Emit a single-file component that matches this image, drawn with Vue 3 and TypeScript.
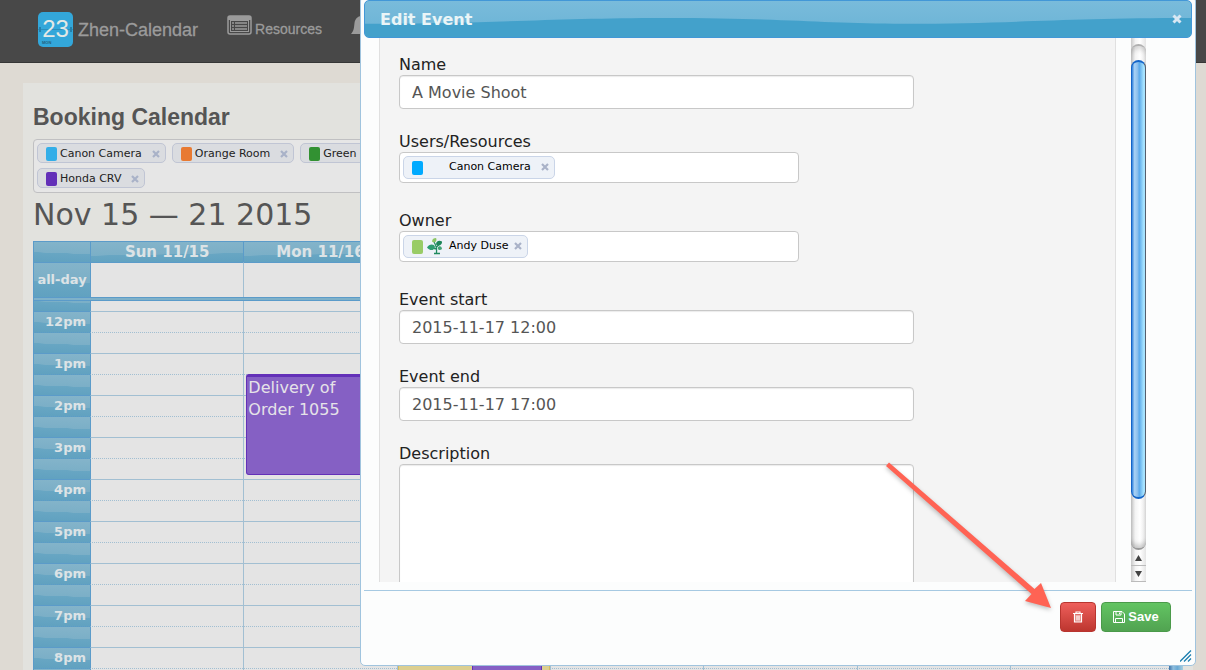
<script setup lang="ts">
import { ref } from 'vue'

interface Token {
  name: string
  color: string
}

const filters = ref<Token[]>([
  { name: 'Canon Camera', color: '#33aee8' },
  { name: 'Orange Room', color: '#e87a32' },
  { name: 'Green Room', color: '#329132' },
  { name: 'Honda CRV', color: '#6330b8' },
])

const dayCount = 7
const dayLabels = ['Sun 11/15', 'Mon 11/16']
const hours = ['12pm', '1pm', '2pm', '3pm', '4pm', '5pm', '6pm', '7pm', '8pm']

interface Slot {
  id: string
  label: string
  half: boolean
}

const slots: Slot[] = [{ id: '11am-half', label: '', half: true }]
for (const hour of hours) {
  slots.push({ id: hour, label: hour, half: false })
  slots.push({ id: `${hour}-half`, label: '', half: true })
}

const name = ref('A Movie Shoot')
const start = ref('2015-11-17 12:00')
const end = ref('2015-11-17 17:00')
const description = ref('')
</script>

<template>
  <div class="app">
    <nav class="navbar">
      <a class="brand" href="#">
        <svg width="35" height="35" viewBox="0 0 35 35" aria-hidden="true">
          <rect width="35" height="35" rx="5" fill="#33a7da" />
          <path d="M0 17.500H35" stroke="#2b8fbd" />
          <rect x="1" y="15" width="2" height="5" fill="#2380ac" />
          <rect x="32" y="15" width="2" height="5" fill="#2380ac" />
          <text x="17.500" y="25" text-anchor="middle" class="logo-day">23</text>
          <text x="4" y="32" class="logo-week">MON</text>
        </svg>
        <span>Zhen-Calendar</span>
      </a>
      <a class="nav-item" href="#">
        <svg width="25" height="20" viewBox="0 0 25 20" aria-hidden="true">
          <rect x="1" y="1" width="23" height="18" rx="2" fill="none" stroke="#9b9b9b" stroke-width="1.500" />
          <path d="M1 1h23v4H1z" fill="#9b9b9b" />
          <rect x="3.500" y="5.500" width="18" height="11" fill="none" stroke="#9b9b9b" />
          <path d="M5 8h2M8 8h12M5 11h2M8 11h12M5 14h2M8 14h12" stroke="#9b9b9b" stroke-width="1.500" />
        </svg>
        <span>Resources</span>
      </a>
      <a class="nav-item bell" href="#" aria-label="Notifications">
        <svg width="20" height="20" viewBox="0 0 20 20" aria-hidden="true">
          <path d="M0 19C3 16 3 12 3.500 8C4 4 7 1 10 1s6 3 6.500 7c.5 4 .5 8 3.500 11z" fill="#9b9b9b" />
        </svg>
      </a>
    </nav>

    <main class="panel">
      <h1>Booking Calendar</h1>
      <div class="filters">
        <span v-for="token in filters" :key="token.name" class="chip">
          <i class="swatch" :style="{ background: token.color }"></i>
          <span>{{ token.name }}</span>
          <button type="button" class="chip-close" :aria-label="`Remove ${token.name}`">
            <svg width="8" height="8" viewBox="0 0 8 8"><path d="M1 1l6 6M7 1l-6 6" /></svg>
          </button>
        </span>
      </div>
      <h2>Nov 15 — 21 2015</h2>

      <section class="calendar">
        <table class="grid head">
          <colgroup>
            <col class="gutter-col" />
            <col v-for="day in dayCount" :key="day" class="day-col" />
          </colgroup>
          <thead>
            <tr>
              <th class="gloss"></th>
              <th v-for="day in dayCount" :key="day" class="gloss wide" scope="col">{{ dayLabels[day - 1] }}</th>
            </tr>
          </thead>
          <tbody>
            <tr class="all-day">
              <th class="gloss" scope="row">all-day</th>
              <td v-for="day in dayCount" :key="day"></td>
            </tr>
          </tbody>
        </table>
        <div class="divider"></div>
        <div class="scroller">
          <table class="grid slots">
            <colgroup>
              <col class="gutter-col" />
              <col v-for="day in dayCount" :key="day" class="day-col" />
            </colgroup>
            <tbody>
              <tr v-for="slot in slots" :key="slot.id" :class="{ half: slot.half }">
                <th class="gloss" scope="row">{{ slot.label }}</th>
                <td v-for="day in dayCount" :key="day">
                  <div v-if="slot.id === '1pm-half' && day === 2" class="event delivery">Delivery of<br />Order 1055</div>
                  <template v-if="slot.id === '8pm' && day === 3">
                    <div class="event shift"></div>
                    <div class="event booking"></div>
                  </template>
                </td>
              </tr>
            </tbody>
          </table>
          <div class="page-bar"></div>
        </div>
      </section>
    </main>

    <section class="dialog" role="dialog" aria-labelledby="dialog-title">
      <header class="titlebar">
        <svg class="wave" viewBox="0 0 828 38" preserveAspectRatio="none" aria-hidden="true">
          <path d="M0 24C130 24 190 18 300 18C420 18 460 24 540 24C650 24 700 18 828 18V38H0z" fill="#43a1cb" />
        </svg>
        <strong id="dialog-title">Edit Event</strong>
        <button type="button" class="dialog-close" aria-label="Close">
          <svg width="10" height="10" viewBox="0 0 10 10"><path d="M1.500 1.500l7 7M8.500 1.500l-7 7" /></svg>
        </button>
      </header>

      <div class="content">
        <form class="form">
          <div class="field">
            <label for="name">Name</label>
            <input id="name" v-model="name" class="text" type="text" />
          </div>
          <div class="field tokens">
            <label for="resources">Users/Resources</label>
            <div class="token-box">
              <span class="chip">
                <i class="swatch sky"></i>
                <i class="avatar"></i>
                <span>Canon Camera</span>
                <button type="button" class="chip-close" aria-label="Remove Canon Camera">
                  <svg width="8" height="8" viewBox="0 0 8 8"><path d="M1 1l6 6M7 1l-6 6" /></svg>
                </button>
              </span>
              <input id="resources" type="text" />
            </div>
          </div>
          <div class="field tokens">
            <label for="owner">Owner</label>
            <div class="token-box">
              <span class="chip owner">
                <i class="swatch lime"></i>
                <svg class="avatar" width="18" height="18" viewBox="0 0 18 18" aria-hidden="true">
                  <path d="M8 5C10 8 11 11 10.500 16M10.500 12C8 12 7 11 5 10M10.500 10l3-3M8 16.500h6" fill="none" stroke="#1f8a5f" stroke-width="1.300" />
                  <path d="M1 10.500C3 7 8 6.500 9 10C8 14.500 3 13.500 1 10.500z" fill="#2d9c70" />
                  <path d="M10 7.500C10 4 13 3 16 4.500C16.500 7.500 13 10 10 7.500z" fill="#1d8659" />
                  <path d="M6 4.500C6 2 8 1 10 1C11.500 3.500 9 7 6 4.500z" fill="#8cc665" />
                  <path d="M11.500 11C13 8 16 9 16 12C14 14 12 13 11.500 11z" fill="#43a476" />
                </svg>
                <span>Andy Duse</span>
                <button type="button" class="chip-close" aria-label="Remove Andy Duse">
                  <svg width="8" height="8" viewBox="0 0 8 8"><path d="M1 1l6 6M7 1l-6 6" /></svg>
                </button>
              </span>
              <input id="owner" type="text" />
            </div>
          </div>
          <div class="field">
            <label for="start">Event start</label>
            <input id="start" v-model="start" class="text" type="text" />
          </div>
          <div class="field">
            <label for="end">Event end</label>
            <input id="end" v-model="end" class="text" type="text" />
          </div>
          <div class="field">
            <label for="description">Description</label>
            <textarea id="description" v-model="description" class="text"></textarea>
          </div>
        </form>
        <div class="scrollbar" aria-hidden="true">
          <div class="track">
            <div class="thumb"></div>
          </div>
          <div class="step"><svg width="7" height="6" viewBox="0 0 7 6"><path d="M3.500 0L7 6H0z" /></svg></div>
          <div class="step"><svg width="7" height="6" viewBox="0 0 7 6"><path d="M0 0h7L3.500 6z" /></svg></div>
        </div>
      </div>

      <footer class="actions">
        <button type="button" class="btn danger" aria-label="Delete">
          <svg width="12" height="12" viewBox="0 0 12 12" aria-hidden="true">
            <path d="M2.500 3.500h7V11h-7z" fill="#fff" fill-opacity="0.35" />
            <path d="M1 2.500h10M4 2.500V1h4v1.500M2.500 3v8h7V3M5 4.500v5M7 4.500v5" fill="none" stroke="#fff" stroke-width="1.200" />
          </svg>
        </button>
        <button type="button" class="btn success">
          <svg width="12" height="12" viewBox="0 0 12 12" aria-hidden="true">
            <path d="M.5.5H9L11.500 3v8.500H.5zM3 .5v3.500h5V.5M2.500 11.500v-4h7v4M6.500 1.500v1.500" fill="none" stroke="#fff" />
          </svg>
          <span>Save</span>
        </button>
      </footer>
      <svg class="grip" width="12" height="12" viewBox="0 0 12 12" aria-hidden="true">
        <path d="M0 11.500L11 .5M4 11.500L11 4.500M8 11.500l3-3" stroke="#1c7fb0" stroke-width="1.300" />
      </svg>
      <svg class="pointer" width="172" height="152" viewBox="0 0 172 152" aria-hidden="true">
        <path d="M9 2.500L154.500 129L161 123L171 148L145 141L151.500 134L6 6z" fill="#ff6354" />
      </svg>
    </section>
  </div>
</template>

<style>
body {
  margin: 0;
}
</style>

<style scoped>
* {
  box-sizing: border-box;
}
.app {
  position: relative;
  height: 100vh;
  overflow: hidden;
  background: #dedad3;
  color: #555;
  font-family: Verdana, 'DejaVu Sans', sans-serif;
}
.navbar {
  display: flex;
  align-items: flex-start;
  height: 63px;
  padding-left: 38px;
  background: #484848;
  border-bottom: 1px solid #363636;
  font: 14px/20px 'Liberation Sans', Arial, sans-serif;
}
.navbar a {
  display: flex;
  color: #9b9b9b;
  text-decoration: none;
  -webkit-text-stroke: 0.3px #9b9b9b;
}
.brand {
  align-items: center;
  gap: 5px;
  padding-top: 12px;
  font-size: 18px;
}
.logo-day {
  font: 24px 'Liberation Sans', Arial, sans-serif;
  fill: #e3e9e6;
  -webkit-text-stroke: 1px #e3e9e6;
}
.logo-week {
  font: bold 4px 'Liberation Sans', Arial, sans-serif;
  fill: #23607d;
  -webkit-text-stroke: 0;
}
.nav-item {
  gap: 3px;
  margin-left: 29px;
  padding-top: 15px;
}
.nav-item span {
  padding-top: 4px;
}
.panel {
  margin: 20px 13px 0 23px;
  padding: 20px 10px 0;
  background: #e2e2de;
}
h1 {
  margin: 0 0 8px;
  font: bold 23px/28px 'Liberation Sans', Arial, sans-serif;
}
h2 {
  height: 48px;
  margin: 0;
  font-size: 30px;
  line-height: 44px;
  font-weight: 400;
}
.filters {
  display: flex;
  flex-wrap: wrap;
  gap: 5px 6px;
  max-width: 440px;
  padding: 3px 3px 4px;
  background: #e6e6e6;
  border: 1px solid #c0c0c2;
  border-radius: 4px;
}
.chip {
  display: flex;
  align-items: center;
  flex: none;
  height: 20px;
  padding: 1px 5px 0 8px;
  border: 1px solid #c0c5d4;
  border-radius: 5px;
  background: #dadce0;
  color: #222;
  font-size: 11px;
  line-height: 18px;
  white-space: nowrap;
}
.swatch {
  flex: none;
  width: 11px;
  height: 14px;
  margin: 1px 3px 0 0;
  border-radius: 2px;
}
.chip-close {
  display: flex;
  margin: 0 0 0 10px;
  padding: 0;
  border: 0;
  background: none;
}
.chip-close path {
  stroke: #a9b2c8;
  stroke-width: 2.2;
}
.grid {
  width: calc(100% - 14px);
  table-layout: fixed;
  border-collapse: separate;
  border-spacing: 0;
}
.gutter-col {
  width: 57px;
}
.day-col {
  width: 13.5%;
}
.day-col:last-child {
  width: auto;
}
.grid th,
.grid td {
  height: 21px;
  padding: 0;
  line-height: 20px;
}
.grid th {
  border-top: 1px solid #5b9bc9;
  border-left: 1px solid #5b9bc9;
  color: #dce3e6;
  font-size: 15px;
}
.gloss {
  background: linear-gradient(182deg, #84b4ca 0, #7bafc7 55%, #68a6c3 56%, #60a1c0 100%);
}
.gloss.wide {
  background: linear-gradient(179deg, #84b4ca 0, #7bafc7 60%, #68a6c3 61%, #60a1c0 100%);
}
.grid td {
  position: relative;
  border-top: 1px solid #a2bfd2;
  border-left: 1px solid #a2bfd2;
  background: #e4e4e4;
}
.grid td:nth-child(2) {
  border-left-color: #5b9bc9;
}
.grid .all-day th,
.grid .all-day td {
  height: 35px;
  border-top-color: #5b9bc9;
}
.grid .all-day th,
.grid.slots th {
  font-size: 13px;
}
.divider {
  height: 4px;
  border: 1px solid #5b9bc9;
  background: #7fb1c9;
}
.scroller {
  display: flex;
  overflow: hidden;
}
.slots {
  margin-top: -11px;
}
.slots th {
  text-align: right;
}
.grid .half th,
.grid .half td {
  border-top-style: dotted;
}
.grid.slots th {
  padding-right: 4px;
}
.page-bar {
  width: 14px;
  background: linear-gradient(90deg, #3d71a8, #8fbedd 30%, #6aa9d4 60%, #a6cfe0);
}
.event {
  position: absolute;
  z-index: 1;
  border: 1px solid #6330b8;
  background: #8560c4;
}
.delivery {
  top: -1px;
  left: 2px;
  right: 2px;
  height: 101px;
  padding-left: 1px;
  border-top-width: 3px;
  border-radius: 3px;
  color: #e5e3e8;
  font-size: 16px;
  line-height: 22px;
}
.shift {
  top: 0;
  left: 0;
  right: 0;
  height: 60px;
  border-color: #d6bd62;
  background: #dccf90;
}
.booking {
  top: 0;
  left: 74px;
  right: 8px;
  height: 60px;
}
.dialog {
  position: absolute;
  z-index: 5;
  top: -4px;
  right: 10px;
  bottom: 4px;
  left: 360px;
  display: flex;
  flex-direction: column;
  padding: 3px;
  border: 1px solid #a0c4de;
  border-radius: 5px;
  background: #fcfdfd;
  color: #222;
}
.titlebar {
  position: relative;
  display: flex;
  flex: none;
  align-items: center;
  justify-content: space-between;
  height: 38px;
  padding: 0 9px 0 15px;
  overflow: hidden;
  border: 1px solid #4297d7;
  border-radius: 5px;
  background: linear-gradient(#79bbdb, #6ab3d5);
  color: #eaf5f7;
  font-size: 16px;
}
.wave {
  position: absolute;
  inset: 0;
  width: 100%;
  height: 100%;
}
.titlebar strong,
.dialog-close {
  position: relative;
}
.dialog-close {
  display: flex;
  padding: 0;
  border: 0;
  background: none;
}
.dialog-close path {
  stroke: #d8e7f3;
  stroke-width: 3;
}
.content {
  display: flex;
  flex: 1;
  gap: 15px;
  min-height: 0;
  padding: 0 46px 0 15px;
  overflow: hidden;
}
.form {
  flex: 1;
  padding: 15px 19px;
  overflow: hidden;
  border: solid #e0e0e0;
  border-width: 0 1px;
  background: #f4f4f4;
}
.field {
  display: flex;
  flex-direction: column;
  margin-bottom: 21px;
}
.tokens {
  margin-bottom: 26px;
}
label {
  padding-top: 2px;
  font-size: 16px;
  line-height: 20px;
}
.text {
  width: 100%;
  max-width: 515px;
  height: 34px;
  padding: 6px 12px;
  border: 1px solid #c8c8c8;
  border-radius: 4px;
  background: #fff;
  box-shadow: inset 0 1px 1px rgba(0, 0, 0, 0.08);
  color: #555;
  font: inherit;
}
textarea.text {
  height: 180px;
  resize: none;
}
.token-box {
  display: flex;
  align-items: center;
  max-width: 400px;
  height: 31px;
  padding: 0 3px;
  border: 1px solid #c8c8c8;
  border-radius: 4px;
  background: #fff;
}
.token-box input {
  flex: 1;
  min-width: 0;
  border: 0;
  outline: 0;
  background: none;
}
.token-box .chip {
  height: 23px;
  padding-top: 0;
  padding-bottom: 1px;
  border-color: #cad5e8;
  background: #eef2f8;
  color: #000;
}
.avatar {
  flex: none;
  width: 18px;
  height: 18px;
  margin-right: 5px;
}
.owner .chip-close {
  margin-left: 6px;
}
.sky {
  background: #00aaff;
}
.lime {
  background: #99cc66;
}
.scrollbar {
  display: flex;
  flex: none;
  flex-direction: column;
  width: 15px;
  background: linear-gradient(90deg, #c9c9c9, #f4f4f4 30%, #fff 60%, #e4e4e4);
}
.track {
  flex: 1;
  margin-top: 6px;
  padding-top: 14px;
  border-top: 2px solid #b0b0b0;
  border-bottom: 2px solid #999;
  border-radius: 8px;
  box-shadow: inset 0 5px 5px -2px rgba(0, 0, 0, 0.15), inset 0 -5px 5px -2px rgba(0, 0, 0, 0.2);
}
.thumb {
  height: 90%;
  border: solid #1465c8;
  border-width: 2px 1px;
  border-right-color: #555f6e;
  border-radius: 8px;
  background: linear-gradient(90deg, #2f80dc, #a9d2f5 20%, #86bcec 45%, #59a8ea 55%, #a6e3ff 90%);
}
.step {
  display: flex;
  align-items: center;
  justify-content: center;
  height: 16px;
  border-bottom: 1px solid #bbb;
}
.step path {
  fill: #444;
}
.actions {
  display: flex;
  flex: none;
  justify-content: flex-end;
  gap: 5px;
  height: 72px;
  margin-top: 8px;
  padding: 11px 21px 0 0;
  border-top: 1px solid #a6c9e2;
}
.btn {
  display: flex;
  align-items: center;
  justify-content: center;
  gap: 3px;
  height: 30px;
  padding: 0 11px;
  border: 1px solid;
  border-radius: 4px;
  color: #fff;
  font: bold 13px/18px 'Liberation Sans', Arial, sans-serif;
}
.danger {
  border-color: #b8352f;
  background: linear-gradient(#ee5f5b, #bd362f);
}
.success {
  min-width: 70px;
  border-color: #4a9a4a;
  background: linear-gradient(#62c462, #51a351);
}
.grip {
  position: absolute;
  right: 3px;
  bottom: 3px;
}
.pointer {
  position: absolute;
  right: 143px;
  bottom: 53px;
  filter: drop-shadow(0 2px 2px rgba(0, 0, 0, 0.25));
}
</style>
